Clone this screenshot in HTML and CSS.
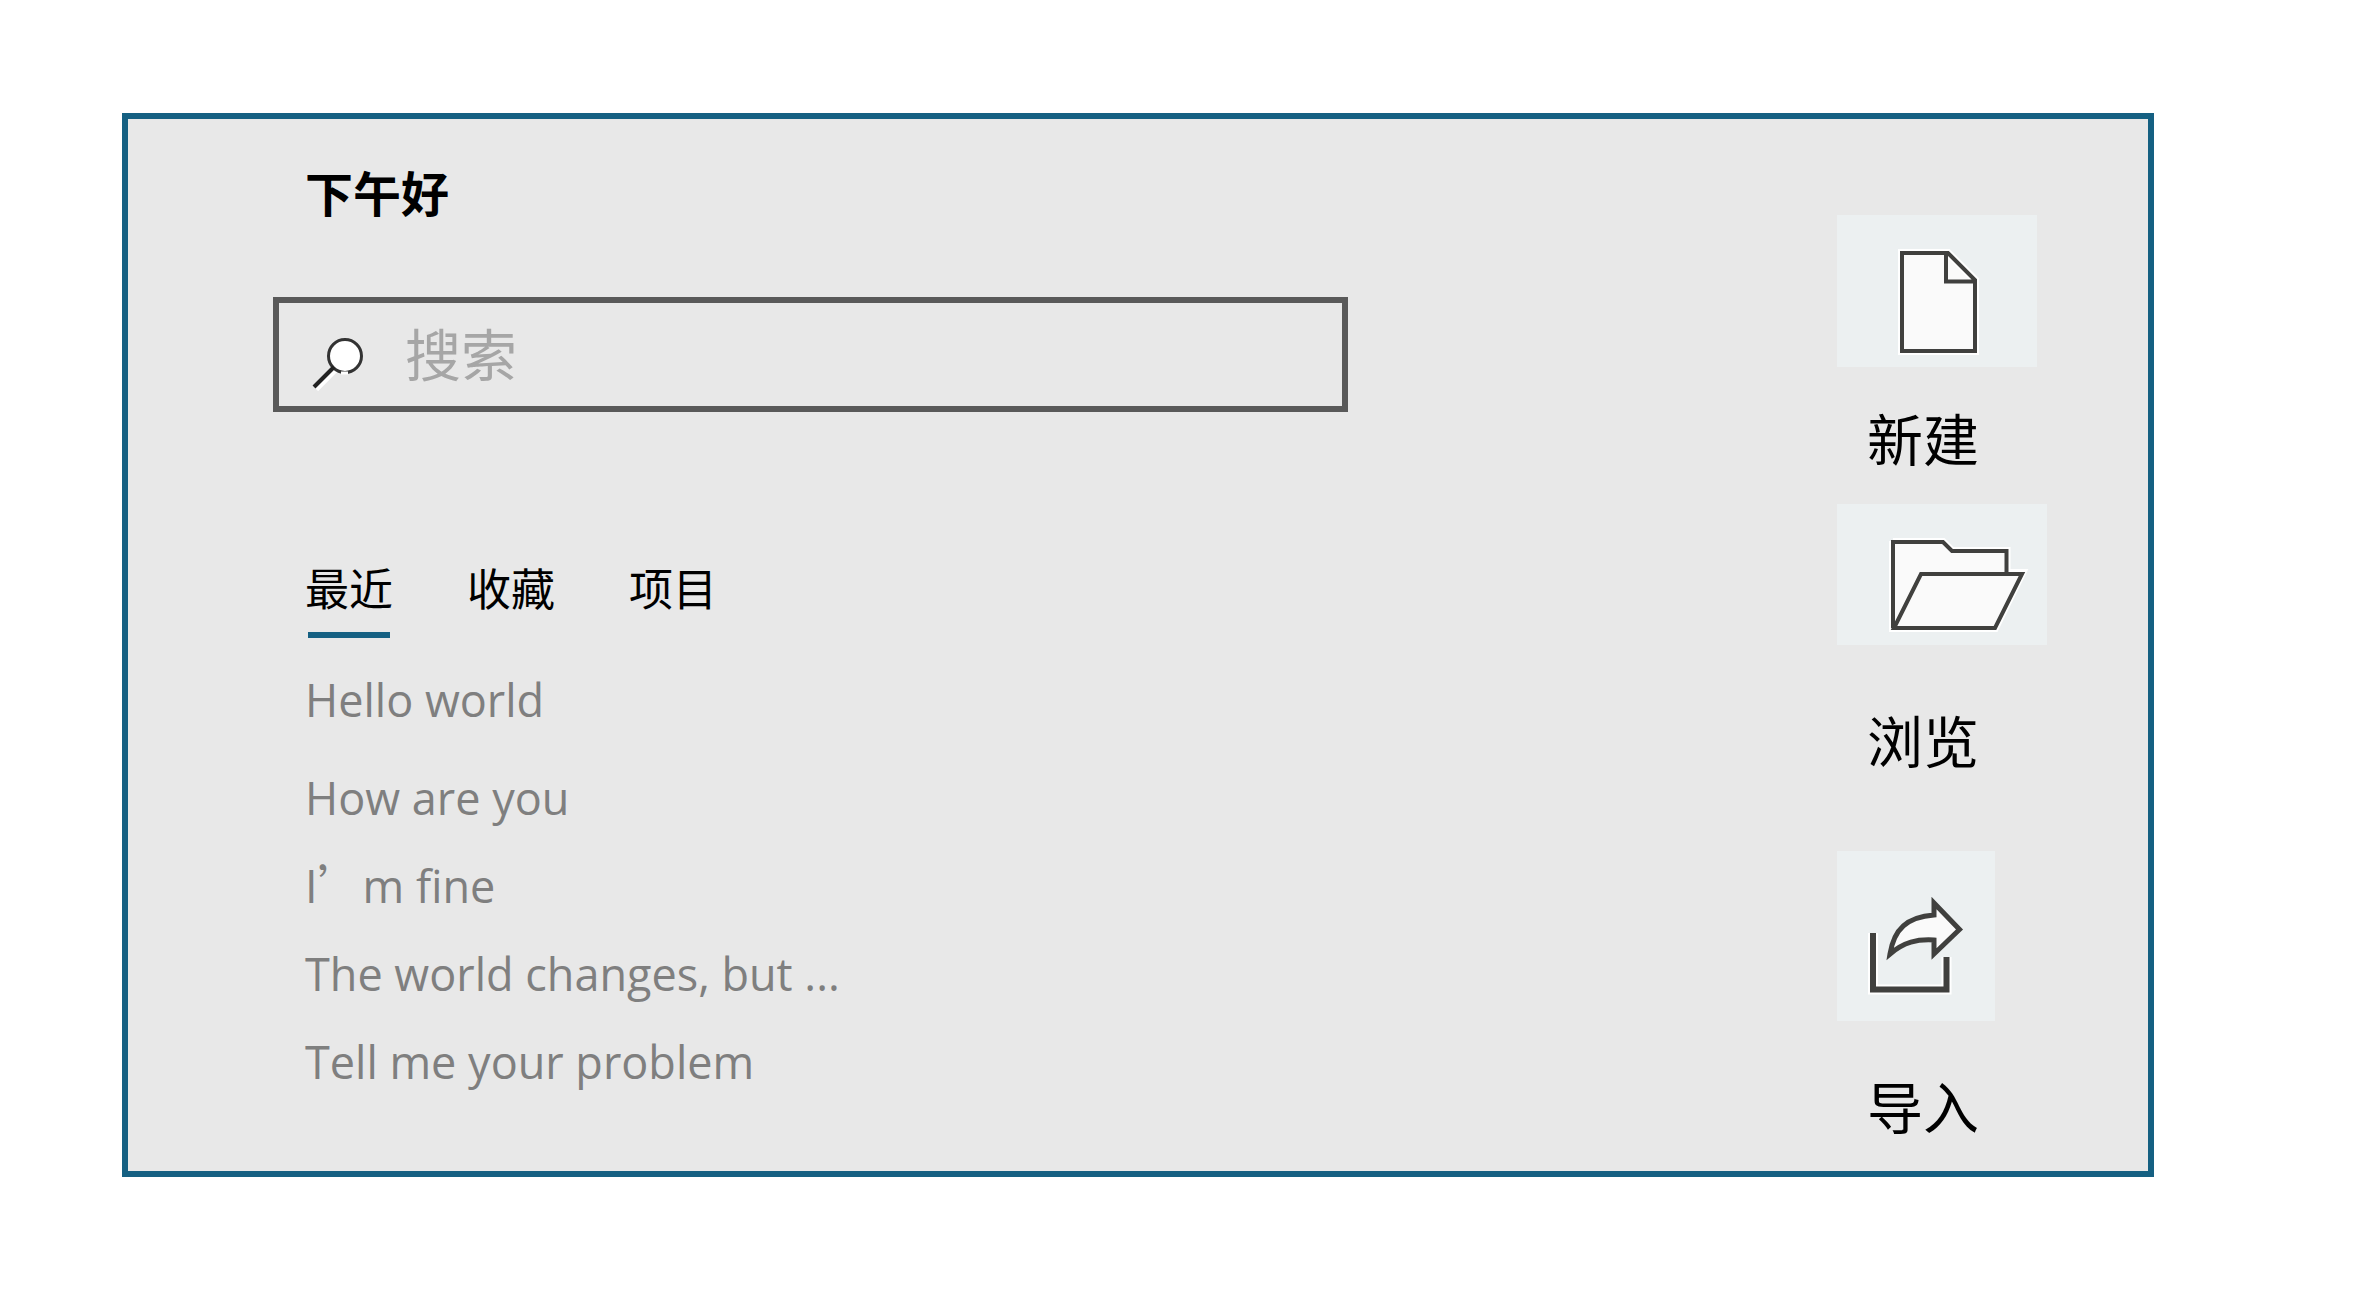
FILE: index.html
```html
<!DOCTYPE html>
<html lang="zh-CN">
<head>
<meta charset="utf-8">
<meta name="viewport" content="width=device-width, initial-scale=1">
<title>下午好</title>
<link rel="stylesheet" href="styles.css">
</head>
<body>
<div class="panel">
  <main class="main">
    <h1 class="greeting">下午好</h1>
    <form class="search" role="search">
      <svg class="search-icon" viewBox="0 0 54 54" aria-hidden="true">
        <path d="M5 52 L24 33" stroke="#fff" stroke-width="6"/>
        <circle cx="34" cy="19" r="16.5" fill="#fff" stroke="#333" stroke-width="3"/>
        <path d="M30 36 H37" stroke="#fff" stroke-width="3"/>
        <path d="M3 50 L23 30" stroke="#222" stroke-width="4"/>
      </svg>
      <input class="search-input" type="text" aria-label="搜索" placeholder="搜索">
    </form>
    <nav class="tabs">
      <button class="tab tab-active" type="button">最近</button>
      <button class="tab" type="button">收藏</button>
      <button class="tab" type="button">项目</button>
    </nav>
    <ul class="recent">
      <li class="recent-first"><a href="#">Hello world</a></li>
      <li><a href="#">How are you</a></li>
      <li><a href="#">I<span class="wide-mark">’</span>m fine</a></li>
      <li><a href="#">The world changes, but ...</a></li>
      <li><a href="#">Tell me your problem</a></li>
    </ul>
  </main>
  <div class="actions">
    <button class="action action-new" type="button">
      <svg class="tile" width="200" height="152" viewBox="0 0 200 152" aria-hidden="true">
        <path d="M65 38 H111 L138 65 V136 H65 Z" fill="#fafafa" stroke="#fff" stroke-width="8"/>
        <path d="M65 38 H111 L138 65 V136 H65 Z M109 38 V66.500 H138" fill="#fafafa" stroke="#40403e" stroke-width="4"/>
      </svg>
      <span class="action-label">新建</span>
    </button>
    <button class="action action-browse" type="button">
      <svg class="tile" width="210" height="141" viewBox="0 0 210 141" aria-hidden="true">
        <path d="M56 38 H106 L115 47 H169.500 V70 M56 37 V124 H158 L185 69 H84 L57 124" fill="#fafafa" stroke="#fff" stroke-width="8"/>
        <path d="M56 124 V38 H106 L115 47 H169.500 V70" fill="#fafafa" stroke="#40403e" stroke-width="4"/>
        <path d="M57 124 L84 70 H185 L158 124 Z" fill="#fafafa" stroke="#40403e" stroke-width="4"/>
      </svg>
      <span class="action-label">浏览</span>
    </button>
    <button class="action action-import" type="button">
      <svg class="tile" width="158" height="170" viewBox="0 0 158 170" aria-hidden="true">
        <path d="M36 82 V138.500 H109.500 V106" fill="none" stroke="#fff" stroke-width="10"/>
        <path d="M36 82 V138.500 H109.500 V106" fill="none" stroke="#40403e" stroke-width="6"/>
        <path d="M53 103 C57 78 70 66 97 64 V52 L122.500 78.500 L97 103 V89 C80 88 67 91 53 103 Z" fill="#fafafa" stroke="#40403e" stroke-width="5"/>
      </svg>
      <span class="action-label">导入</span>
    </button>
  </div>
</div>
</body>
</html>
```
FILE: styles.css
```css
* {
  box-sizing: border-box;
}

body {
  margin: 0;
  padding: 113px 219px 113px 122px;
  background: #fff;
  color: #000;
  font-family: "Noto Sans CJK SC", sans-serif;
}

button {
  padding: 0;
  border: 0;
  background: none;
  color: inherit;
  font: inherit;
  text-align: left;
  cursor: pointer;
}

.panel {
  display: flex;
  justify-content: space-between;
  padding: 36px 101px 24px 145px;
  border: 6px solid #156082;
  background: #e8e8e8;
}

.main {
  flex: 0 1 1075px;
  min-width: 0;
}

.greeting {
  margin: 0 0 70px;
  padding-left: 32px;
  font-size: 48px;
  line-height: 72px;
  font-weight: 700;
}

.search {
  display: flex;
  align-items: center;
  gap: 40px;
  height: 115px;
  padding: 0 32px;
  border: 6px solid #595959;
}

.search-icon {
  flex: none;
  width: 54px;
  height: 54px;
  margin-top: 18px;
}

.search-input {
  flex: 1;
  min-width: 0;
  height: 90px;
  padding: 0 0 6px;
  border: 0;
  outline: 0;
  background: none;
  font: 56px/84px "Noto Sans CJK SC", sans-serif;
}

.search-input::placeholder {
  color: #a6a6a6;
  opacity: 1;
}

.tabs {
  display: flex;
  gap: 74px;
  margin-top: 142px;
  padding-left: 32px;
}

.tab {
  height: 84px;
  padding-bottom: 18px;
  font-size: 44px;
  line-height: 66px;
}

.tab-active {
  background: linear-gradient(#156082, #156082) center bottom / 82px 6px no-repeat;
}

.recent {
  margin: 18px 0 0;
  padding: 0 0 0 32px;
  list-style: none;
  font: 45px/88px "Open Sans", "Noto Sans CJK SC", sans-serif;
}

.recent a {
  color: #7f7f7f;
  text-decoration: none;
}

.recent-first {
  margin-bottom: 10px;
}

.wide-mark {
  font-family: "Noto Sans CJK SC", sans-serif;
  line-height: 1;
}

.actions {
  display: flex;
  flex-direction: column;
  flex: none;
  padding-top: 60px;
}

.action {
  display: flex;
  flex-direction: column;
}

.tile {
  display: block;
  background: #ecf0f1;
}

.action-label {
  padding-left: 30px;
  font-size: 56px;
  line-height: 84px;
}

.action-new {
  gap: 28px;
  margin-bottom: 25px;
}

.action-browse {
  gap: 52px;
  margin-bottom: 70px;
}

.action-import {
  gap: 42px;
}
```
